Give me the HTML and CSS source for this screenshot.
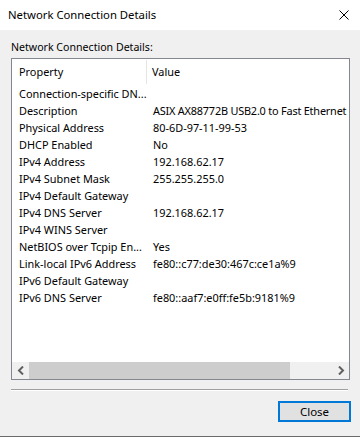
FILE: index.html
```html
<!DOCTYPE html>
<html>
<head>
<meta charset="utf-8">
<link rel="stylesheet" href="styles.css">
</head>
<body>
<div class="window">
  <div class="titlebar">
    <span class="title">Network Connection Details</span>
    <svg class="close-x" width="10" height="10" viewBox="0 0 10 10"><path d="M0.5 0.5 L9.5 9.5 M9.5 0.5 L0.5 9.5" stroke="#000" stroke-width="1" fill="none"/></svg>
  </div>
  <div class="body">
    <div class="label">Network Connection Details:</div>
    <div class="listview">
      <div class="header">
        <div class="hcell prop">Property</div>
        <div class="hcell val">Value</div>
      </div>
      <div class="rows">
        <div class="row"><div class="c1">Connection-specific DN...</div><div class="c2"></div></div>
        <div class="row"><div class="c1">Description</div><div class="c2 tight">ASIX AX88772B USB2.0 to Fast Ethernet</div></div>
        <div class="row"><div class="c1">Physical Address</div><div class="c2">80-6D-97-11-99-53</div></div>
        <div class="row"><div class="c1">DHCP Enabled</div><div class="c2">No</div></div>
        <div class="row"><div class="c1">IPv4 Address</div><div class="c2">192.168.62.17</div></div>
        <div class="row"><div class="c1">IPv4 Subnet Mask</div><div class="c2">255.255.255.0</div></div>
        <div class="row"><div class="c1">IPv4 Default Gateway</div><div class="c2"></div></div>
        <div class="row"><div class="c1">IPv4 DNS Server</div><div class="c2">192.168.62.17</div></div>
        <div class="row"><div class="c1">IPv4 WINS Server</div><div class="c2"></div></div>
        <div class="row"><div class="c1">NetBIOS over Tcpip En...</div><div class="c2">Yes</div></div>
        <div class="row"><div class="c1">Link-local IPv6 Address</div><div class="c2">fe80::c77:de30:467c:ce1a%9</div></div>
        <div class="row"><div class="c1">IPv6 Default Gateway</div><div class="c2"></div></div>
        <div class="row"><div class="c1">IPv6 DNS Server</div><div class="c2">fe80::aaf7:e0ff:fe5b:9181%9</div></div>
      </div>
      <div class="hscroll">
        <div class="arrow"><svg width="8" height="9" viewBox="0 0 8 9"><path d="M6 0.5 L2 4.5 L6 8.5" stroke="#606060" stroke-width="2" fill="none"/></svg></div>
        <div class="track"><div class="thumb"></div></div>
        <div class="arrow"><svg width="8" height="9" viewBox="0 0 8 9"><path d="M2 0.5 L6 4.5 L2 8.5" stroke="#606060" stroke-width="2" fill="none"/></svg></div>
      </div>
    </div>
    <div class="separator"></div>
    <div class="buttons">
      <button class="btn">Close</button>
    </div>
  </div>
</div>
</body>
</html>
```

FILE: styles.css
```css
* { box-sizing: border-box; }
html, body { margin: 0; padding: 0; background: #fff; }
body {
  font-family: "Noto Sans", "Open Sans", sans-serif;
  font-size: 10.9px;
  color: #000;
}
.window {
  width: 360px;
  height: 437px;
  display: flex;
  flex-direction: column;
}
.titlebar {
  height: 30px;
  background: #fff;
  display: flex;
  align-items: center;
  justify-content: space-between;
  padding: 0 11px 0 8px;
}
.title {
  font-size: 11.3px;
  line-height: 16px;
}
.close-x { display: block; }
.body {
  flex: 1;
  background: #f0f0f0;
  border-bottom: 1px solid #6a6a6a;
  padding: 8px 10px 0 11px;
  display: flex;
  flex-direction: column;
}
.label {
  height: 20px;
  line-height: 18px;
  font-size: 10.6px;
}
.listview {
  width: 339px;
  height: 322px;
  border: 1px solid #828790;
  background: #fff;
  display: flex;
  flex-direction: column;
}
.header {
  height: 26px;
  display: flex;
  align-items: stretch;
  flex: none;
}
.hcell.prop {
  width: 135px;
  padding-left: 7px;
  border-right: 1px solid #e5e5e5;
  margin: 1px 0;
  line-height: 24px;
}
.hcell.val {
  padding-left: 5px;
  line-height: 26px;
}
.rows {
  flex: 1;
  overflow: hidden;
}
.row {
  height: 17px;
  display: flex;
  line-height: 17px;
  white-space: nowrap;
}
.c1 {
  width: 136px;
  padding-left: 7px;
  flex: none;
  overflow: hidden;
}
.c2 {
  padding-left: 5px;
  flex: none;
}
.c2.tight {
  letter-spacing: -0.2px;
}
.hscroll {
  height: 17px;
  flex: none;
  display: flex;
  background: #f0f0f0;
}
.arrow {
  width: 17px;
  display: flex;
  align-items: center;
  justify-content: center;
}
.track {
  flex: 1;
  padding-right: 42px;
  display: flex;
}
.thumb {
  flex: 1;
  background: #cdcdcd;
}
.separator {
  margin-top: 9px;
  width: 337px;
  height: 2px;
  border-top: 1px solid #a0a0a0;
  border-bottom: 1px solid #fff;
}
.buttons {
  display: flex;
  justify-content: flex-end;
  padding-top: 10px;
}
.btn {
  width: 73px;
  height: 21px;
  margin-right: -1px;
  font-family: inherit;
  font-size: 11.5px;
  color: #000;
  background: #e1e1e1;
  border: 2px solid #0078d7;
  padding: 0;
}
```
